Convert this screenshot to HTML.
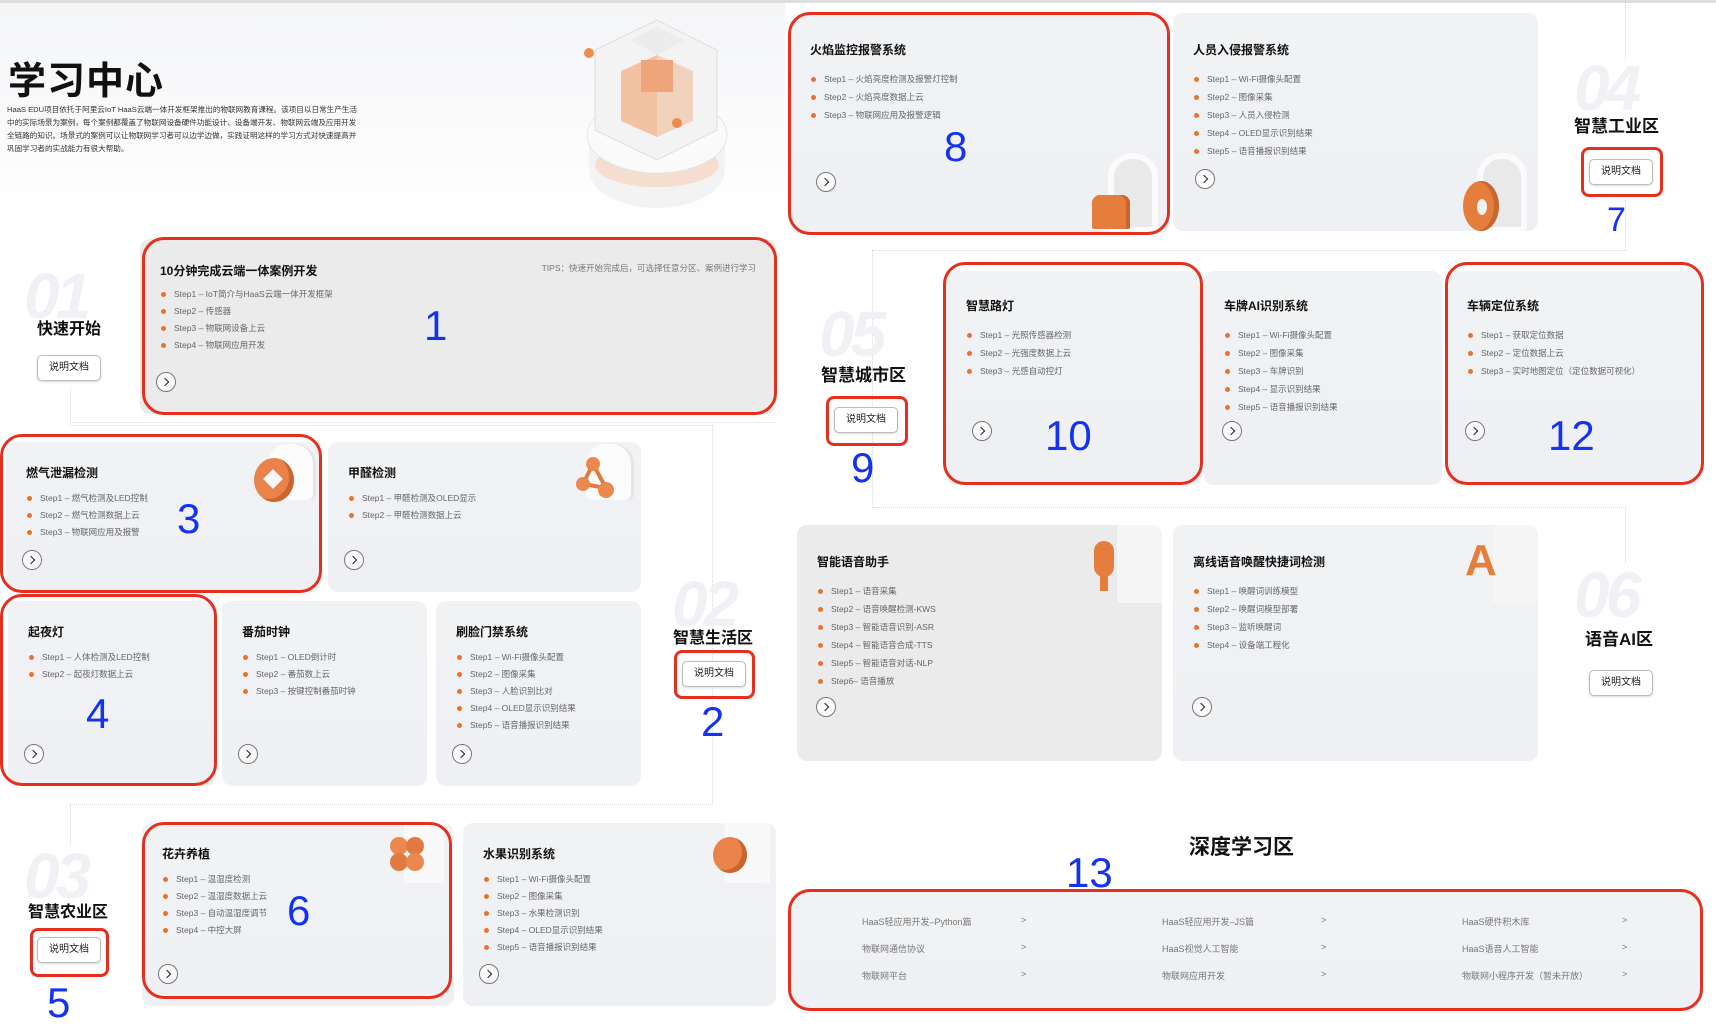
<!DOCTYPE html>
<html><head><meta charset="utf-8">
<style>
*{margin:0;padding:0;box-sizing:border-box}
body{width:1716px;height:1016px;overflow:hidden;background:#fff;position:relative;font-family:"Liberation Sans","Noto Sans CJK SC",sans-serif;color:#111}
.a{position:absolute}
.c{position:absolute;background:linear-gradient(180deg,#f1f2f4,#eef0f3);border-radius:10px;overflow:hidden}
.c.g{background:#ebebec}
.t{position:absolute;left:20px;top:22px;font-size:12px;font-weight:bold;color:#111;white-space:nowrap}
.s{position:absolute;left:20px;top:48px;list-style:none}
.s li{font-size:8.5px;color:#666;line-height:17px;height:17px;padding-left:14px;position:relative;white-space:nowrap}
.s.w li{line-height:18px;height:18px}
.s li:before{content:"";position:absolute;left:1px;top:6px;width:5px;height:5px;border-radius:50%;background:#e8732f}
.s.w li:before{top:7px}
.ar{position:absolute;left:16px;bottom:22px;width:20px;height:20px;border:1px solid #777;border-radius:50%;background:#fafafa}
.ar:after{content:"";position:absolute;left:5px;top:6px;width:5px;height:5px;border-right:1.3px solid #222;border-top:1.3px solid #222;transform:rotate(45deg)}
.r{position:absolute;border:3px solid #e5301f;border-radius:22px}
.n{position:absolute;color:#1432f0;font-size:42px;font-family:"Liberation Sans",sans-serif;font-weight:normal;line-height:1}
.wm{position:absolute;font-size:64px;font-weight:bold;font-style:italic;color:#f0f1f4;line-height:1;letter-spacing:-4px}
.zt{position:absolute;font-size:16px;font-weight:bold;color:#111;white-space:nowrap}
.bt{position:absolute;width:64px;height:26px;border:1.5px solid #bbb;border-radius:5px;background:#fff;font-size:10px;text-align:center;line-height:23px;color:#222;box-shadow:0 1px 2px rgba(0,0,0,.15)}
.dl{position:absolute;border:0 dotted #d6d8dc}
.ic{position:absolute}
.dr{position:absolute;font-size:9px;color:#777;white-space:nowrap}
</style></head><body>
<div class="a" style="left:0;top:0;width:1716px;height:3px;background:#dedede"></div>
<div class="a" style="left:0;top:3px;width:785px;height:220px;background:linear-gradient(180deg,#f4f5f7,#fff)"></div>

<div class="a" style="left:8px;top:50px;font-size:38px;font-weight:bold;letter-spacing:1px">学习中心</div>
<div class="a" style="left:7px;top:103px;width:355px;font-size:7.6px;line-height:13px;color:#333">HaaS EDU项目依托于阿里云IoT HaaS云端一体开发框架推出的物联网教育课程。该项目以日常生产生活中的实际场景为案例，每个案例都覆盖了物联网设备硬件功能设计、设备端开发、物联网云端及应用开发全链路的知识。场景式的案例可以让物联网学习者可以边学边做，实践证明这样的学习方式对快速提高并巩固学习者的实战能力有很大帮助。</div>

<svg class="a" style="left:575px;top:5px" width="165" height="210" viewBox="0 0 165 210">
<ellipse cx="82" cy="165" rx="68" ry="38" fill="#f3f3f4"/>
<rect x="14" y="130" width="136" height="35" fill="#f3f3f4"/>
<ellipse cx="82" cy="160" rx="62" ry="22" fill="#f7c9a9" opacity=".5"/>
<ellipse cx="82" cy="130" rx="70" ry="38" fill="#fafafa" stroke="#e6e6e6"/>
<polygon points="20,45 82,15 142,45 142,125 82,155 20,125" fill="#f3f3f3" stroke="#ddd"/>
<polygon points="82,50 118,66 118,116 82,132" fill="#f1d2bd"/>
<polygon points="46,66 82,50 82,132 46,116" fill="#f2c2a3"/>
<polygon points="55,35 82,22 110,35 82,50" fill="#ececec"/>
<rect x="66" y="55" width="32" height="32" fill="#f0a479"/>
<circle cx="14" cy="48" r="5" fill="#ee8c4e"/>
<circle cx="102" cy="118" r="5" fill="#ee8c4e"/>
</svg>

<div class="dl" style="left:70px;top:388px;width:705px;height:35px;border-left-width:1px;border-bottom-width:1px"></div>
<div class="dl" style="left:70px;top:425px;width:643px;height:380px;border-top-width:1px;border-right-width:1px;border-bottom-width:1px"></div>
<div class="dl" style="left:70px;top:805px;width:1px;height:40px;border-left-width:1px"></div>

<div class="wm" style="left:24px;top:264px">01</div>
<div class="zt" style="left:37px;top:315px">快速开始</div>
<div class="bt" style="left:37px;top:355px">说明文档</div>
<div class="c g" style="left:140px;top:239px;width:636px;height:175px">
<div class="t" style="top:23px">10分钟完成云端一体案例开发</div>
<div class="a" style="right:20px;top:23px;font-size:8.5px;color:#777">TIPS：快速开始完成后，可选择任意分区、案例进行学习</div>
<ul class="s" style="top:47px"><li>Step1 – IoT简介与HaaS云端一体开发框架</li><li>Step2 – 传感器</li><li>Step3 – 物联网设备上云</li><li>Step4 – 物联网应用开发</li></ul>
<div class="ar"></div></div>
<div class="r" style="left:142px;top:237px;width:635px;height:178px"></div>
<div class="n" style="left:424px;top:305px">1</div>

<div class="c" style="left:6px;top:442px;width:315px;height:150px">
<div class="t">燃气泄漏检测</div>
<ul class="s"><li>Step1 – 燃气检测及LED控制</li><li>Step2 – 燃气检测数据上云</li><li>Step3 – 物联网应用及报警</li></ul>
<div class="ar"></div>
<div class="ic" style="left:262px;top:2px;width:48px;height:56px;background:#fbfbfb;border-radius:20px 20px 6px 6px;box-shadow:inset -3px 0 0 #e5e5e5"></div>
<div class="ic" style="left:248px;top:16px;width:40px;height:44px;border-radius:50%;background:#e9834a;box-shadow:inset -5px -3px 0 #c9662f"></div>
<div class="ic" style="left:260px;top:30px;width:14px;height:14px;background:#f7f7f7;transform:rotate(45deg)"></div>
</div>
<div class="r" style="left:0;top:434px;width:322px;height:159px"></div>
<div class="n" style="left:177px;top:498px">3</div>

<div class="c" style="left:328px;top:442px;width:313px;height:150px">
<div class="t">甲醛检测</div>
<ul class="s"><li>Step1 – 甲醛检测及OLED显示</li><li>Step2 – 甲醛检测数据上云</li></ul>
<div class="ar"></div>
<div class="ic" style="left:258px;top:2px;width:48px;height:56px;background:#fbfbfb;border-radius:20px 20px 6px 6px;box-shadow:inset -3px 0 0 #e5e5e5"></div>
<svg class="ic" style="left:245px;top:12px" width="45" height="50"><line x1="20" y1="10" x2="10" y2="30" stroke="#e07a40" stroke-width="4"/><line x1="20" y1="10" x2="33" y2="34" stroke="#e07a40" stroke-width="4"/><line x1="10" y1="30" x2="33" y2="34" stroke="#e07a40" stroke-width="4"/><circle cx="20" cy="10" r="7" fill="#ea8850"/><circle cx="10" cy="30" r="7" fill="#ea8850"/><circle cx="33" cy="36" r="8" fill="#ea8850"/></svg>
</div>

<div class="c" style="left:8px;top:601px;width:208px;height:185px">
<div class="t">起夜灯</div>
<ul class="s"><li>Step1 – 人体检测及LED控制</li><li>Step2 – 起夜灯数据上云</li></ul>
<div class="ar"></div></div>
<div class="r" style="left:0;top:594px;width:217px;height:192px"></div>
<div class="n" style="left:86px;top:693px">4</div>

<div class="c" style="left:222px;top:601px;width:205px;height:185px">
<div class="t">番茄时钟</div>
<ul class="s"><li>Step1 – OLED倒计时</li><li>Step2 – 番茄数上云</li><li>Step3 – 按键控制番茄时钟</li></ul>
<div class="ar"></div></div>

<div class="c" style="left:436px;top:601px;width:205px;height:185px">
<div class="t">刷脸门禁系统</div>
<ul class="s"><li>Step1 – Wi-Fi摄像头配置</li><li>Step2 – 图像采集</li><li>Step3 – 人脸识别比对</li><li>Step4 – OLED显示识别结果</li><li>Step5 – 语音播报识别结果</li></ul>
<div class="ar"></div></div>

<div class="wm" style="left:672px;top:572px">02</div>
<div class="zt" style="left:673px;top:624px">智慧生活区</div>
<div class="bt" style="left:682px;top:661px">说明文档</div>
<div class="r" style="left:674px;top:650px;width:81px;height:49px;border-radius:8px"></div>
<div class="n" style="left:701px;top:701px">2</div>

<div class="wm" style="left:24px;top:844px">03</div>
<div class="zt" style="left:28px;top:898px">智慧农业区</div>
<div class="bt" style="left:37px;top:937px">说明文档</div>
<div class="r" style="left:30px;top:928px;width:79px;height:49px;border-radius:8px"></div>
<div class="n" style="left:47px;top:982px">5</div>

<div class="c" style="left:142px;top:823px;width:312px;height:183px">
<div class="t">花卉养植</div>
<ul class="s"><li>Step1 – 温湿度检测</li><li>Step2 – 温湿度数据上云</li><li>Step3 – 自动温湿度调节</li><li>Step4 – 中控大屏</li></ul>
<div class="ar"></div>
<div class="ic" style="left:262px;top:0;width:40px;height:60px;background:#f9f9f9"></div>
<div class="ic" style="left:248px;top:14px;width:18px;height:18px;border-radius:50%;background:#ea8850"></div>
<div class="ic" style="left:264px;top:14px;width:18px;height:18px;border-radius:50%;background:#e07a40"></div>
<div class="ic" style="left:248px;top:30px;width:18px;height:18px;border-radius:50%;background:#e07a40"></div>
<div class="ic" style="left:264px;top:30px;width:18px;height:18px;border-radius:50%;background:#ea8850"></div>
</div>
<div class="r" style="left:142px;top:822px;width:310px;height:177px"></div>
<div class="n" style="left:287px;top:890px">6</div>

<div class="c" style="left:463px;top:823px;width:313px;height:183px">
<div class="t">水果识别系统</div>
<ul class="s"><li>Step1 – Wi-Fi摄像头配置</li><li>Step2 – 图像采集</li><li>Step3 – 水果检测识别</li><li>Step4 – OLED显示识别结果</li><li>Step5 – 语音播报识别结果</li></ul>
<div class="ar"></div>
<div class="ic" style="left:262px;top:0;width:45px;height:60px;background:#f9f9f9"></div>
<div class="ic" style="left:250px;top:14px;width:34px;height:36px;border-radius:50%;background:#e9834a;box-shadow:inset -5px -3px 0 #c9662f"></div>
</div>

<div class="dl" style="left:1625px;top:0;width:1px;height:60px;border-left-width:1px"></div>
<div class="dl" style="left:872px;top:250px;width:754px;height:258px;border-top-width:1px;border-left-width:1px;border-bottom-width:1px"></div>
<div class="dl" style="left:1625px;top:200px;width:1px;height:50px;border-left-width:1px"></div>
<div class="dl" style="left:1625px;top:508px;width:1px;height:55px;border-left-width:1px"></div>

<div class="c" style="left:790px;top:13px;width:379px;height:221px">
<div class="t" style="top:28px">火焰监控报警系统</div>
<ul class="s w" style="top:57px"><li>Step1 – 火焰亮度检测及报警灯控制</li><li>Step2 – 火焰亮度数据上云</li><li>Step3 – 物联网应用及报警逻辑</li></ul>
<div class="ar" style="left:26px;bottom:42px"></div>
<div class="ic" style="left:318px;top:140px;width:50px;height:80px;background:#e9e9ea;border:6px solid #fbfbfb;border-radius:24px 24px 6px 6px"></div>
<div class="ic" style="left:302px;top:182px;width:38px;height:34px;background:#e57d3c;border-radius:8px 8px 2px 2px;box-shadow:inset -4px 0 0 #c9662f"></div>
</div>
<div class="r" style="left:788px;top:12px;width:382px;height:223px"></div>
<div class="n" style="left:944px;top:126px">8</div>

<div class="c" style="left:1173px;top:13px;width:365px;height:218px">
<div class="t" style="top:28px">人员入侵报警系统</div>
<ul class="s w" style="top:57px"><li>Step1 – Wi-Fi摄像头配置</li><li>Step2 – 图像采集</li><li>Step3 – 人员入侵检测</li><li>Step4 – OLED显示识别结果</li><li>Step5 – 语音播报识别结果</li></ul>
<div class="ar" style="left:22px;bottom:42px"></div>
<div class="ic" style="left:304px;top:140px;width:50px;height:80px;background:#e9e9ea;border:6px solid #fbfbfb;border-radius:24px 24px 6px 6px"></div>
<div class="ic" style="left:290px;top:168px;width:36px;height:50px;border-radius:50%;background:#e57d3c;box-shadow:inset -5px 0 0 #c9662f"></div>
<div class="ic" style="left:304px;top:186px;width:10px;height:16px;border-radius:50%;background:#f1f1f1"></div>
</div>

<div class="wm" style="left:1574px;top:56px">04</div>
<div class="zt" style="left:1574px;top:112px;font-size:17px">智慧工业区</div>
<div class="bt" style="left:1589px;top:159px">说明文档</div>
<div class="r" style="left:1581px;top:147px;width:82px;height:50px;border-radius:8px"></div>
<div class="n" style="left:1607px;top:203px;font-size:34px">7</div>

<div class="wm" style="left:819px;top:302px">05</div>
<div class="zt" style="left:821px;top:361px;font-size:17px">智慧城市区</div>
<div class="bt" style="left:834px;top:407px">说明文档</div>
<div class="r" style="left:826px;top:396px;width:82px;height:50px;border-radius:8px"></div>
<div class="n" style="left:851px;top:447px">9</div>

<div class="c" style="left:946px;top:271px;width:256px;height:214px">
<div class="t" style="top:26px">智慧路灯</div>
<ul class="s w" style="top:55px"><li>Step1 – 光照传感器检测</li><li>Step2 – 光强度数据上云</li><li>Step3 – 光感自动控灯</li></ul>
<div class="ar" style="left:26px;bottom:44px"></div></div>
<div class="r" style="left:943px;top:262px;width:260px;height:223px"></div>
<div class="n" style="left:1045px;top:415px">10</div>

<div class="c" style="left:1204px;top:271px;width:238px;height:214px">
<div class="t" style="top:26px">车牌AI识别系统</div>
<ul class="s w" style="top:55px"><li>Step1 – Wi-Fi摄像头配置</li><li>Step2 – 图像采集</li><li>Step3 – 车牌识别</li><li>Step4 – 显示识别结果</li><li>Step5 – 语音播报识别结果</li></ul>
<div class="ar" style="left:18px;bottom:44px"></div></div>

<div class="c" style="left:1447px;top:271px;width:255px;height:214px">
<div class="t" style="top:26px">车辆定位系统</div>
<ul class="s w" style="top:55px"><li>Step1 – 获取定位数据</li><li>Step2 – 定位数据上云</li><li>Step3 – 实时地图定位（定位数据可视化）</li></ul>
<div class="ar" style="left:18px;bottom:44px"></div></div>
<div class="r" style="left:1445px;top:262px;width:259px;height:223px"></div>
<div class="n" style="left:1548px;top:415px">12</div>

<div class="c g" style="left:797px;top:525px;width:365px;height:236px">
<div class="t" style="top:28px">智能语音助手</div>
<ul class="s w" style="top:57px"><li>Step1 – 语音采集</li><li>Step2 – 语音唤醒检测-KWS</li><li>Step3 – 智能语音识别-ASR</li><li>Step4 – 智能语音合成-TTS</li><li>Step5 – 智能语音对话-NLP</li><li>Step6– 语音播放</li></ul>
<div class="ar" style="left:19px;bottom:44px"></div>
<div class="ic" style="left:320px;top:0;width:45px;height:78px;background:#f5f5f6"></div>
<div class="ic" style="left:297px;top:16px;width:20px;height:36px;border-radius:10px;background:#e57d3c"></div>
<div class="ic" style="left:303px;top:50px;width:8px;height:16px;background:#e57d3c"></div>
</div>

<div class="c" style="left:1173px;top:525px;width:365px;height:236px">
<div class="t" style="top:28px">离线语音唤醒快捷词检测</div>
<ul class="s w" style="top:57px"><li>Step1 – 唤醒词训练模型</li><li>Step2 – 唤醒词模型部署</li><li>Step3 – 监听唤醒词</li><li>Step4 – 设备端工程化</li></ul>
<div class="ar" style="left:19px;bottom:44px"></div>
<div class="ic" style="left:320px;top:0;width:45px;height:78px;background:#f5f5f6"></div>
<div class="ic" style="left:292px;top:14px;font-size:44px;font-weight:bold;color:#e57d3c;line-height:1">A</div>
</div>

<div class="wm" style="left:1574px;top:563px">06</div>
<div class="zt" style="left:1585px;top:625px;font-size:17px">语音AI区</div>
<div class="bt" style="left:1589px;top:670px">说明文档</div>

<div class="zt" style="left:1189px;top:831px;font-size:21px">深度学习区</div>
<div class="n" style="left:1066px;top:852px">13</div>
<div class="c" style="left:791px;top:891px;width:910px;height:117px">
<div class="dr" style="left:71px;top:24px">HaaS轻应用开发–Python篇</div><div class="dr" style="left:230px;top:24px">&gt;</div>
<div class="dr" style="left:371px;top:24px">HaaS轻应用开发–JS篇</div><div class="dr" style="left:530px;top:24px">&gt;</div>
<div class="dr" style="left:671px;top:24px">HaaS硬件积木库</div><div class="dr" style="left:831px;top:24px">&gt;</div>
<div class="dr" style="left:71px;top:51px">物联网通信协议</div><div class="dr" style="left:230px;top:51px">&gt;</div>
<div class="dr" style="left:371px;top:51px">HaaS视觉人工智能</div><div class="dr" style="left:530px;top:51px">&gt;</div>
<div class="dr" style="left:671px;top:51px">HaaS语音人工智能</div><div class="dr" style="left:831px;top:51px">&gt;</div>
<div class="dr" style="left:71px;top:78px">物联网平台</div><div class="dr" style="left:230px;top:78px">&gt;</div>
<div class="dr" style="left:371px;top:78px">物联网应用开发</div><div class="dr" style="left:530px;top:78px">&gt;</div>
<div class="dr" style="left:671px;top:78px">物联网小程序开发（暂未开放）</div><div class="dr" style="left:831px;top:78px">&gt;</div>
</div>
<div class="r" style="left:788px;top:889px;width:915px;height:122px"></div>
</body></html>
